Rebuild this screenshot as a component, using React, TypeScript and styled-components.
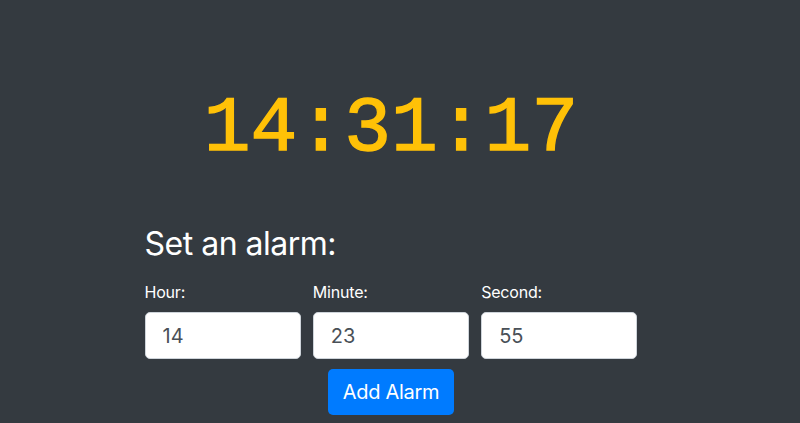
import React from "react";
import styled, { createGlobalStyle } from "styled-components";

const Global = createGlobalStyle`
  html, body { margin: 0; padding: 0; background: #343a40; }
  body { font-family: Inter, "Liberation Sans", sans-serif; }
  * { box-sizing: border-box; }
`;

const Page = styled.div`
  width: 800px;
  height: 423px;
  background: #343a40;
  display: flex;
  flex-direction: column;
  align-items: center;
  padding-right: 18px;
  overflow: hidden;
`;

const Clock = styled.div`
  margin-top: 85px;
  font-family: "Liberation Mono", "DejaVu Sans Mono", monospace;
  font-size: 78px;
  line-height: 88px;
  color: #ffc107;
  -webkit-text-stroke: 1.4px #ffc107;
`;

const Form = styled.form`
  width: 493px;
  margin-top: 51px;
  display: flex;
  flex-direction: column;
`;

const Title = styled.h2`
  margin: 0;
  font-size: 32px;
  font-weight: 400;
  letter-spacing: -0.5px;
  line-height: 40px;
  color: #fff;
`;

const Row = styled.div`
  margin-top: 18px;
  display: grid;
  grid-template-columns: repeat(3, 1fr);
  column-gap: 12px;
`;

const Field = styled.div`
  display: flex;
  flex-direction: column;
`;

const Label = styled.label`
  font-size: 16px;
  line-height: 20px;
  letter-spacing: -0.2px;
  color: #fff;
  margin-bottom: 10px;
`;

const Input = styled.input`
  height: 47px;
  width: 100%;
  padding: 0 17px;
  font-family: inherit;
  font-size: 20px;
  color: #495057;
  background: #fff;
  border: 1px solid #ced4da;
  border-radius: 5px;
  outline: none;
`;

const Actions = styled.div`
  display: flex;
  justify-content: center;
  margin-top: 10px;
`;

const Button = styled.button`
  height: 46px;
  padding: 0 15px;
  font-family: inherit;
  font-size: 20px;
  letter-spacing: -0.3px;
  color: #fff;
  background: #007bff;
  border: none;
  border-radius: 5px;
`;

export default function App() {
  return (
    <>
      <Global />
      <Page>
        <Clock>14:31:17</Clock>
        <Form onSubmit={(e) => e.preventDefault()}>
          <Title>Set an alarm:</Title>
          <Row>
            <Field>
              <Label>Hour:</Label>
              <Input defaultValue="14" />
            </Field>
            <Field>
              <Label>Minute:</Label>
              <Input defaultValue="23" />
            </Field>
            <Field>
              <Label>Second:</Label>
              <Input defaultValue="55" />
            </Field>
          </Row>
          <Actions>
            <Button type="submit">Add Alarm</Button>
          </Actions>
        </Form>
      </Page>
    </>
  );
}
